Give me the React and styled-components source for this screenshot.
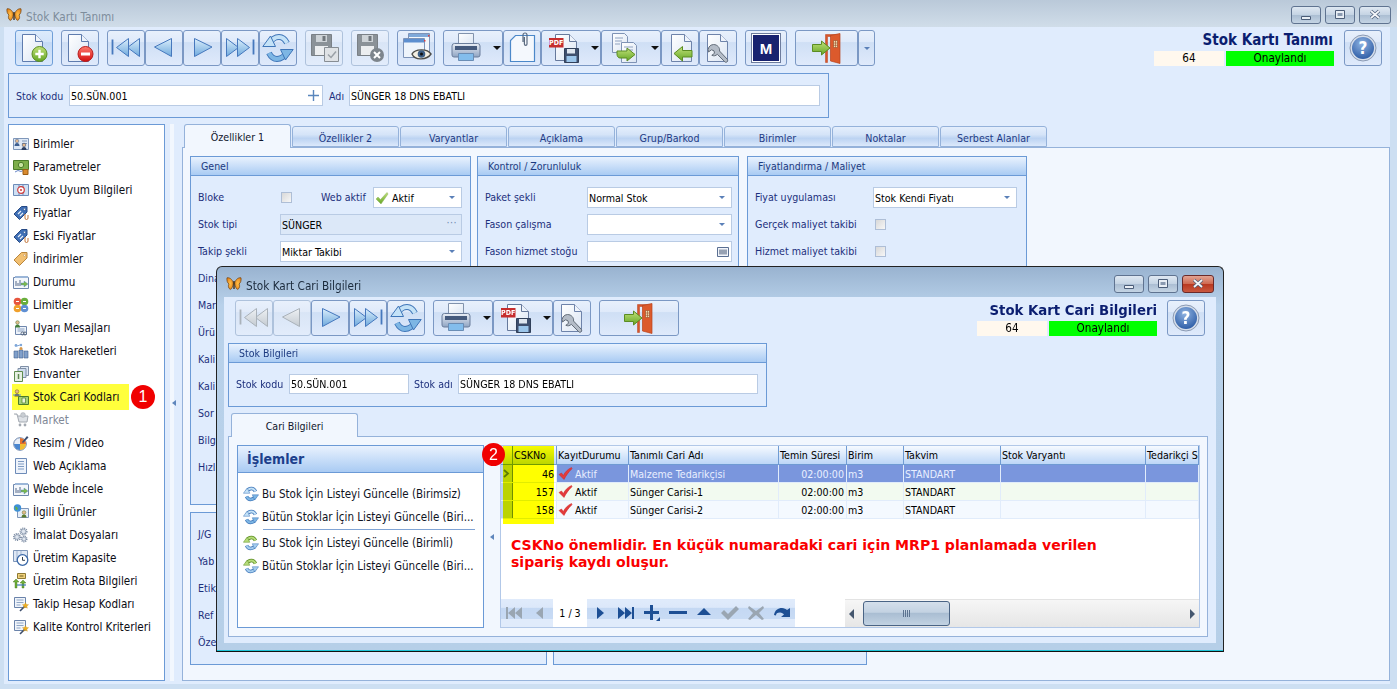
import React from "react";
import styled, { createGlobalStyle } from "styled-components";

const FONT = '"DejaVu Sans", "Liberation Sans", sans-serif';

const Global = createGlobalStyle`
  html, body { margin: 0; padding: 0; overflow: hidden; }
  body { font-family: ${FONT}; font-stretch: condensed; font-size: 10.6px; color: #000; }
  * { box-sizing: border-box; }
`;

/* ---------- frame ---------- */
const Screen = styled.div`
  position: relative;
  width: 1397px;
  height: 689px;
  overflow: hidden;
  display: flex;
  flex-direction: column;
  background: #cddff2;
`;
const TitleBar = styled.div`
  height: 27px;
  flex: none;
  display: flex;
  align-items: flex-start;
  padding: 7px 6px 0 6px;
  background: linear-gradient(#bac9d9, #d0dde9);
`;
const TitleText = styled.div`
  margin-left: 4px;
  padding-top: 1px;
  line-height: 18px;
  font-size: 11.7px;
  color: ${p => (p.$active ? "#1b2a3c" : "#7e8d9c")};
`;
const WinButtons = styled.div`
  margin-left: auto;
  margin-top: -1px;
  display: flex;
  gap: 4px;
`;
const WinButton = styled.div`
  width: ${p => (p.$wide ? 32 : 30)}px;
  height: 18px;
  display: flex;
  align-items: center;
  justify-content: center;
  border: 1px solid ${p => (p.$close ? "#6a2a2a" : "#5f7390")};
  border-radius: 3px;
  background: ${p =>
    p.$close
      ? "linear-gradient(#e2a393, #cf6b53 48%, #b8371f 50%, #c9583f)"
      : "linear-gradient(#dfe8f2, #c5d4e4 48%, #aabdd2 50%, #c4d4e4)"};
`;
const Client = styled.div`
  flex: 1;
  min-height: 0;
  margin: 0 7px 5px 4px;
  display: flex;
  flex-direction: column;
  background: #e0ecfd;
`;
const Toolbar = styled.div`
  display: flex;
  flex: none;
  height: 36px;
  margin: 3px ${p => p.$mr || 8}px 0 11px;
  gap: 8px;
`;
const ToolGroup = styled.div`
  display: flex;
`;
const ToolButton = styled.div`
  width: ${p => p.$w || 38}px;
  height: 36px;
  flex: none;
  display: flex;
  align-items: center;
  justify-content: ${p => (p.$split ? "flex-start" : "center")};
  padding-left: ${p => (p.$split ? 7 : 0)}px;
  border: 1px solid ${p => (p.$off ? "#aec2dc" : p.$hot ? "#6f9fd8" : "#7b98c4")};
  border-radius: 3px;
  background: ${p =>
    p.$hot
      ? "linear-gradient(#dcebfc, #d3e4fa 32%, #c3d9f6 34%, #d8e7fb)"
      : p.$off
      ? "linear-gradient(#e8f0fc, #e2ebf9 32%, #d9e5f6 34%, #e2ecfb)"
      : "linear-gradient(#e8f0fc, #dfeafa 32%, #cfdff5 34%, #dfeafb)"};
`;
const DropMark = styled.span`
  margin-left: 10px;
  width: 0;
  height: 0;
  border-left: 4px solid transparent;
  border-right: 4px solid transparent;
  border-top: 4px solid #111;
`;
const SmallDrop = styled.span`
  width: 0;
  height: 0;
  border-left: 3px solid transparent;
  border-right: 3px solid transparent;
  border-top: 3px solid #5a80b8;
`;
const HeadBlock = styled.div`
  margin-left: auto;
  display: flex;
  gap: 10px;
`;
const HeadText = styled.div`
  display: flex;
  flex-direction: column;
  align-items: flex-end;
  justify-content: flex-end;
`;
const HeadTitle = styled.div`
  font-weight: 700;
  font-size: ${p => p.$size || 15}px;
  line-height: 18px;
  margin: 0 ${p => (p.$flush ? 0 : 1)}px 2px 0;
  color: #0b1e70;
`;
const StatusRow = styled.div`
  display: flex;
  gap: 2px;
  height: 15px;
  line-height: 15px;
  text-align: center;
  font-size: 11.6px;
`;
const StatusNo = styled.div`
  width: 70px;
  background: #fff8ee;
`;
const StatusOk = styled.div`
  width: 108px;
  background: #00ff00;
`;

/* ---------- form parts ---------- */
const FilterBox = styled.div`
  flex: none;
  width: 821px;
  height: 45px;
  margin: 7px 0 0 4px;
  border: 1px solid #6b9ad6;
  display: flex;
  align-items: center;
  padding: 0 8px 0 7px;
  color: #1c2f7c;
`;
const Input = styled.div`
  width: ${p => p.$w}px;
  height: ${p => p.$h || 21}px;
  flex: none;
  display: flex;
  align-items: center;
  padding: 0 ${p => p.$pr || 2}px 0 1px;
  color: #000;
  white-space: nowrap;
  overflow: hidden;
  background: ${p => (p.$off ? "#dce8f8" : "#fff")};
  border: 1px solid #b9cbe4;
`;
const EndMark = styled.span`
  margin-left: auto;
  display: flex;
  align-items: center;
`;
const Body = styled.div`
  flex: 1;
  min-height: 0;
  display: flex;
  margin: 6px 0 3px 4px;
`;
const Side = styled.div`
  width: 157px;
  flex: none;
  padding: 7px 0 0 0;
  font-size: 11.6px;
  background: #fff;
  border: 1px solid #6b9ad6;
`;
const SideRow = styled.div`
  position: relative;
  display: flex;
  align-items: center;
  gap: 4px;
  height: 23px;
  margin-left: ${p => (p.$mark ? 3 : 0)}px;
  padding-left: ${p => (p.$mark ? 1 : 4)}px;
  white-space: nowrap;
  width: ${p => (p.$mark ? "117px" : "auto")};
  color: ${p => (p.$off ? "#7f8896" : "#0c0c14")};
  background: ${p => (p.$mark ? "#ffff3c" : "none")};
  box-shadow: ${p => (p.$mark ? "0 -1px 0 #ffff3c, 0 2px 0 #ffff3c" : "none")};
`;
const Badge = styled.div`
  position: absolute;
  left: ${p => p.$x}px;
  top: ${p => p.$y}px;
  width: ${p => p.$d}px;
  height: ${p => p.$d}px;
  z-index: 3;
  border-radius: 50%;
  background: #f00000;
  color: #fff;
  font-family: "Liberation Sans", sans-serif;
  font-stretch: normal;
  font-size: 16px;
  text-align: center;
  line-height: ${p => p.$d}px;
`;
const Splitter = styled.div`
  width: ${p => p.$w}px;
  flex: none;
  display: flex;
  align-items: center;
  justify-content: center;
  background: ${p =>
    p.$band ? "linear-gradient(90deg, #e0ecfd 30%, #f2f7fe 30%, #f2f7fe 55%, #e0ecfd 55%)" : "none"};
`;
const Arrow = styled.span`
  width: 0;
  height: 0;
  border-top: 3px solid transparent;
  border-bottom: 3px solid transparent;
  border-right: 4px solid #5f86bc;
`;
const TabZone = styled.div`
  flex: 1;
  min-width: 0;
  display: flex;
  flex-direction: column;
`;
const TabBar = styled.div`
  display: flex;
  align-items: flex-end;
  height: 23px;
  flex: none;
  gap: 1px;
  padding-left: ${p => p.$pl}px;
`;
const Tab = styled.div`
  width: ${p => p.$w}px;
  height: ${p => (p.$on ? 24 : 21)}px;
  display: flex;
  align-items: center;
  justify-content: center;
  padding-top: ${p => (p.$sub ? 2 : 1)}px;
  margin-bottom: ${p => (p.$on ? -1 : 0)}px;
  position: relative;
  color: ${p => (p.$on ? "#10162c" : "#1f3b85")};
  border: 1px solid #95b2da;
  border-bottom: ${p => (p.$on ? "none" : "1px solid #95b2da")};
  border-radius: 3px 3px 0 0;
  background: ${p =>
    p.$on ? "#f2f7fe" : "linear-gradient(#e4eefc, #d5e4f8 40%, #bcd3f2 60%, #dce9fb)"};
`;
const TabPage = styled.div`
  flex: 1;
  min-height: 0;
  border: 1px solid #95b2da;
  background: #f2f7fe;
  padding: ${p => p.$pad};
`;
const GroupRow = styled.div`
  display: flex;
  gap: 6px;
  margin-bottom: 7px;
`;
const Group = styled.div`
  width: ${p => p.$w}px;
  height: ${p => p.$h}px;
  flex: none;
  margin: ${p => p.$m || 0};
  border: 1px solid #6b9ad6;
  background: #e0ecfd;
  color: #1c2f7c;
  overflow: hidden;
`;
const GroupHead = styled.div`
  height: 19px;
  padding-left: 10px;
  line-height: 18px;
  font-size: 10.5px;
  color: #1c3a80;
  border-bottom: 1px solid #6b9ad6;
  background: linear-gradient(#e9f2fe, #a9cbf3);
`;
const Field = styled.div`
  display: flex;
  align-items: center;
  height: 21px;
`;
const InfoField = styled.div`
  display: flex;
  align-items: center;
  height: 20px;
  margin: 11px 0 0 7px;
`;
const FieldLabel = styled.div`
  width: ${p => p.$w}px;
  flex: none;
  white-space: nowrap;
  padding-left: ${p => p.$pl || 0}px;
`;
const WebLabel = styled.span`
  width: 52px;
  flex: none;
  margin-left: 29px;
  white-space: nowrap;
`;
const GroupBody = styled.div`
  display: flex;
  flex-direction: column;
  gap: 6px;
  padding: ${p => p.$pt || 11}px 0 0 7px;
  ${FieldLabel}, ${WebLabel} {
    padding-bottom: 2px;
  }
`;
const Check = styled.span`
  width: 11px;
  height: 11px;
  flex: none;
  margin-left: ${p => p.$ml || 1}px;
  border: 1px solid #aebed6;
  background: linear-gradient(135deg, #d8d8d8, #f7f7f7);
`;
const DotMark = styled.span`
  margin-left: auto;
  margin-right: 2px;
  color: #6f8bb0;
  letter-spacing: 0.5px;
  line-height: 1;
  padding-bottom: 4px;
`;

/* ---------- modal ---------- */
const Modal = styled.div`
  position: absolute;
  left: 216px;
  top: 266px;
  width: 1008px;
  height: 386px;
  z-index: 5;
  display: flex;
  flex-direction: column;
  padding: 0 7px;
  border: 1px solid #222;
  border-bottom: 1px solid #111;
  border-radius: 6px 6px 0 0;
  background: linear-gradient(#99b3d0, #b8d1ea 10%, #b6cfe8);
  box-shadow: inset 0 -1px 0 #1fc3d6;
`;
const ModalTitle = styled.div`
  height: 30px;
  flex: none;
  display: flex;
  align-items: flex-start;
  padding: 9px 2px 0 2px;
`;
const ModalBody = styled.div`
  height: 346px;
  flex: none;
  display: flex;
  flex-direction: column;
  background: #e0ecfd;
`;
const ModalTabs = styled.div`
  flex: none;
  margin: 6px 8px 0 4px;
  display: flex;
  flex-direction: column;
  height: 224px;
`;
const PageRow = styled.div`
  display: flex;
  height: 183px;
`;
const Panel = styled.div`
  width: 247px;
  flex: none;
  background: #fff;
  border: 1px solid #6b9ad6;
`;
const PanelHead = styled.div`
  height: 27px;
  padding-left: 9px;
  line-height: 27px;
  font-weight: 700;
  font-size: 14px;
  color: #1c3f8c;
  border-bottom: 1px solid #6b9ad6;
  background: linear-gradient(#e9f2fe, #a9cbf3);
`;
const PanelList = styled.div`
  padding: 9px 0 0 5px;
`;
const PanelItem = styled.div`
  display: flex;
  align-items: center;
  gap: 3px;
  height: 23px;
  font-size: 11.5px;
  white-space: nowrap;
  color: #10141f;
`;
const PanelRule = styled.div`
  height: 1px;
  margin: 1px 8px 1px 20px;
  background: #7fa3d4;
`;
const Grid = styled.div`
  position: relative;
  width: 700px;
  flex: none;
  display: flex;
  flex-direction: column;
  background: #fff;
  border: 1px solid #b2c8e8;
`;
const Marker = styled.div`
  position: absolute;
  left: 2px;
  top: 0;
  width: 51px;
  height: 78px;
  z-index: 2;
  background: #ffff00;
  mix-blend-mode: multiply;
`;
const GridRow = styled.div`
  display: flex;
  flex: none;
  height: ${p => (p.$head ? 19 : 18)}px;
  color: ${p => (p.$sel ? "#e9efff" : "#000")};
  background: ${p => p.$bg || "none"};
  border-bottom: ${p => (p.$head ? "1px solid #6f9bd3" : "1px solid #e1ecfb")};
`;
const Cell = styled.div`
  flex: none;
  width: ${p => p.$w}px;
  display: flex;
  align-items: center;
  gap: 2px;
  padding: 0 2px 0 1px;
  overflow: hidden;
  white-space: nowrap;
  justify-content: ${p => (p.$right ? "flex-end" : "flex-start")};
  color: ${p => (p.$key ? "#000" : "inherit")};
  background: ${p =>
    p.$head ? "linear-gradient(#f6faff, #bcd6f7)" : p.$ind ? "#bcd3f1" : p.$key ? "#fff" : "none"};
  border-right: 1px solid ${p => (p.$head ? "#6f9bd3" : p.$ind ? "#6f8d4c" : "#e1ecfb")};
`;
const Note = styled.div`
  flex: 1;
  min-height: 0;
  padding: 18px 0 0 10px;
  font-stretch: normal;
  font-weight: 700;
  font-size: 14.05px;
  line-height: 17px;
  color: #fa0000;
`;
const Foot = styled.div`
  flex: none;
  height: 28px;
  display: flex;
`;
const NavBand = styled.div`
  display: flex;
  width: 294px;
  flex: none;
  background: linear-gradient(#e0ebfb, #dce8fa 30%, #c4d8f3 32%, #c8dbf4 70%, #e0ebfb 72%);
`;
const NavCell = styled.div`
  width: 26px;
  flex: none;
  display: flex;
  align-items: center;
  justify-content: center;
`;
const NavCount = styled.div`
  width: 34px;
  flex: none;
  text-align: center;
  line-height: 28px;
  background: #fff;
`;
const Scroll = styled.div`
  margin-left: 50px;
  flex: 1;
  display: flex;
  align-items: center;
  padding-right: 4px;
  background: linear-gradient(#f6f6f6, #e6e6e6);
  border-top: 1px solid #e3e3e3;
`;
const Thumb = styled.div`
  width: 87px;
  height: 25px;
  margin: 0 auto 1px 9px;
  display: flex;
  align-items: center;
  justify-content: center;
  border: 1px solid #4a6485;
  border-radius: 3px;
  background: linear-gradient(#d4dfeb, #c3d2e2 45%, #a9bdd2 48%, #c2d2e2);
`;
const ScrollHead = styled.span`
  width: 0;
  height: 0;
  margin-left: 4px;
  border-top: 5px solid transparent;
  border-bottom: 5px solid transparent;
  ${p => (p.$back ? "border-right: 5px solid #44566e;" : "border-left: 5px solid #44566e;")}
`;
const Grip = styled.span`
  width: 7px;
  height: 7px;
  background: repeating-linear-gradient(90deg, #5c7390 0 1px, transparent 1px 2px);
`;
const MLogoBox = styled.div`
  width: 30px;
  height: 30px;
  border: 1px solid #6d7c9d;
  padding: 1px;
  background: #fff;
`;
const MLogoInner = styled.div`
  height: 100%;
  display: flex;
  align-items: center;
  justify-content: center;
  background: #18226f;
  color: #fff;
  font-family: "Liberation Sans", sans-serif;
  font-weight: 700;
  font-size: 15px;
`;
const DefsHolder = styled.svg`
  position: absolute;
  width: 0;
  height: 0;
`;
const IcSvg = styled.svg`
  flex: none;
`;

/* ---------- icons ---------- */
const Defs = () => (
  <DefsHolder>
    <defs>
      <linearGradient id="paper" x1="0" y1="0" x2="1" y2="1">
        <stop offset="0" stopColor="#ffffff" />
        <stop offset="1" stopColor="#dbe5f3" />
      </linearGradient>
      <linearGradient id="arrowBlue" x1="0" y1="0" x2="0" y2="1">
        <stop offset="0" stopColor="#dbeefb" />
        <stop offset="1" stopColor="#6ea9dd" />
      </linearGradient>
      <linearGradient id="arrowGray" x1="0" y1="0" x2="0" y2="1">
        <stop offset="0" stopColor="#eef1f4" />
        <stop offset="1" stopColor="#c3cad1" />
      </linearGradient>
      <linearGradient id="greenFill" x1="0" y1="0" x2="0" y2="1">
        <stop offset="0" stopColor="#c2e27a" />
        <stop offset="1" stopColor="#63a524" />
      </linearGradient>
      <linearGradient id="redFill" x1="0" y1="0" x2="0" y2="1">
        <stop offset="0" stopColor="#ff7b6e" />
        <stop offset="1" stopColor="#d40d0d" />
      </linearGradient>
      <linearGradient id="printer" x1="0" y1="0" x2="0" y2="1">
        <stop offset="0" stopColor="#e9eef6" />
        <stop offset="1" stopColor="#8fa4c2" />
      </linearGradient>
      <radialGradient id="helpBlue" cx="0.45" cy="0.3" r="0.8">
        <stop offset="0" stopColor="#8fb3e2" />
        <stop offset="1" stopColor="#23539f" />
      </radialGradient>
      <radialGradient id="wing" cx="0.5" cy="0.5" r="0.7">
        <stop offset="0" stopColor="#ffc14a" />
        <stop offset="1" stopColor="#e0730f" />
      </radialGradient>
    </defs>
  </DefsHolder>
);

const Ic = ({ s = 32, vb = 32, children }) => (
  <IcSvg width={s} height={s} viewBox={`0 0 ${vb} ${vb}`}>
    {children}
  </IcSvg>
);

const Page = () => (
  <>
    <path d="M4.500 2.500h13l7 7v20h-20z" fill="url(#paper)" stroke="#5f7cae" />
    <path d="M17.500 2.500v7h7" fill="#eef3fb" stroke="#5f7cae" />
  </>
);

const Butterfly = () => (
  <Ic s={16} vb={16}>
    <path d="M7.400 7C6.400 3.400 3.600 1.300 1 1.800.5 4.200 1.400 7 3 8c-1 1.200-.9 4.300 1.200 5.400C6 13.200 7 10 7.400 7z" fill="url(#wing)" stroke="#6d4210" strokeWidth=".7" />
    <path d="M8.600 7c1-3.600 3.800-5.700 6.400-5.200.5 2.400-.4 5.200-2 6.200 1 1.200.9 4.300-1.200 5.400C10 13.200 9 10 8.600 7z" fill="url(#wing)" stroke="#6d4210" strokeWidth=".7" />
    <path d="M8 5v8" stroke="#3a2408" strokeWidth="1.300" />
  </Ic>
);

const IconNew = () => (
  <Ic>
    <Page />
    <circle cx="21.500" cy="22" r="7.500" fill="url(#greenFill)" stroke="#5b8c22" />
    <path d="M21.500 17.800v8.400M17.300 22h8.400" stroke="#fff" strokeWidth="2.400" />
  </Ic>
);
const IconDel = () => (
  <Ic>
    <Page />
    <circle cx="21.500" cy="22" r="7.500" fill="url(#redFill)" stroke="#b71c1c" />
    <path d="M17 22h9" stroke="#fff" strokeWidth="3" />
  </Ic>
);
const arrowProps = off => ({
  fill: off ? "url(#arrowGray)" : "url(#arrowBlue)",
  stroke: off ? "#aab2ba" : "#4678bd",
  strokeWidth: 1,
});
const IconFirst = ({ off }) => (
  <Ic>
    <path d="M2.500 7.500v15" stroke={off ? "#aab2ba" : "#4678bd"} strokeWidth="1.800" />
    <path d="M29.500 6.500v18l-12-9z" {...arrowProps(off)} />
    <path d="M18.500 6.500v18l-12-9z" {...arrowProps(off)} />
  </Ic>
);
const IconPrev = ({ off }) => (
  <Ic>
    <path d="M23.500 6.500v18L6.500 15z" {...arrowProps(off)} />
  </Ic>
);
const IconNext = ({ off }) => (
  <Ic>
    <path d="M8.500 6.500v18L26 15z" {...arrowProps(off)} />
  </Ic>
);
const IconLast = ({ off }) => (
  <Ic>
    <path d="M29.500 7.500v15" stroke={off ? "#aab2ba" : "#4678bd"} strokeWidth="1.800" />
    <path d="M2.500 6.500v18l12-9z" {...arrowProps(off)} />
    <path d="M13.500 6.500v18l12-9z" {...arrowProps(off)} />
  </Ic>
);
const SpinPaths = ({ a = "#3e75b8", la = "#c4e2f7", b = "#3e75b8", lb = "#7db6e4", w = 6 }) => (
  <>
    <path d="M7 13C9 7 14 5 17 5c3 0 6 2 8 6" fill="none" stroke={a} strokeWidth={w} />
    <path d="M7 13C9 7 14 5 17 5c3 0 6 2 8 6" fill="none" stroke={la} strokeWidth="4" />
    <path d="M25 19c-2 6-7 8-10 8-3 0-6-2-8-6" fill="none" stroke={b} strokeWidth={w} />
    <path d="M25 19c-2 6-7 8-10 8-3 0-6-2-8-6" fill="none" stroke={lb} strokeWidth="4" />
    <path d="M.8 14.500L8.500 4l5 10.500z" fill={la} stroke={a} />
    <path d="M31.200 17.500L23.500 28l-5-10.500z" fill={lb} stroke={b} />
  </>
);
const IconRefresh = () => (
  <Ic>
    <SpinPaths />
  </Ic>
);
const SpinBlue = () => (
  <Ic s={16} vb={32}>
    <SpinPaths w={7} />
  </Ic>
);
const SpinGreen = () => (
  <Ic s={16} vb={32}>
    <SpinPaths a="#5b8c22" la="#b6dc7a" lb="#a5cdee" w={7} />
  </Ic>
);
const Floppy = () => (
  <>
    <path d="M3.500 2.500h20v21h-20z" fill="#8b9298" stroke="#7a8086" />
    <path d="M8 3h11v7H8z" fill="#ced3d7" />
    <path d="M14.500 4h3v5h-3z" fill="#70767c" />
    <path d="M7 14h13v9H7z" fill="#eceef0" />
  </>
);
const IconSave = () => (
  <Ic>
    <Floppy />
    <path d="M16.500 15.500h14v14h-14z" fill="#dfe2e5" stroke="#878d93" />
    <path d="M20 22.500l3 3 5-6" fill="none" stroke="#9aa0a6" strokeWidth="1.500" />
  </Ic>
);
const IconSaveX = () => (
  <Ic>
    <Floppy />
    <circle cx="23" cy="23" r="7" fill="#7d858c" />
    <path d="M20 20l6 6M26 20l-6 6" stroke="#fff" strokeWidth="2" />
  </Ic>
);
const IconView = () => (
  <Ic>
    <path d="M8.500 1.500h21v19h-21z" fill="#f3f7fc" stroke="#7d93b8" />
    <path d="M9 2h20v3H9z" fill="#7fa9da" />
    <path d="M3.500 6.500h21v19h-21z" fill="#eef4fb" stroke="#7d93b8" />
    <path d="M4 7h20v3.500H4z" fill="#5d8fcf" />
    <path d="M24 8h1.500v1.500H24zM28 3h1.500v1.500H28z" fill="#e04040" />
    <path d="M12 22c3-5 15-6 19 0-4 6-16 7-19 0z" fill="#f4efe2" stroke="#4c4c48" strokeWidth="1.400" />
    <circle cx="21.500" cy="22" r="3.800" fill="#3d5f86" />
    <circle cx="21.500" cy="22" r="1.500" fill="#111" />
  </Ic>
);
const IconPrinter = () => (
  <Ic>
    <path d="M7.500 1.500h15v11h-15z" fill="url(#paper)" stroke="#8293ad" />
    <path d="M3.500 11.500h23a2.500 2.500 0 0 1 2.500 2.500v9a2 2 0 0 1-2 2h-24a2 2 0 0 1-2-2v-9a2.500 2.500 0 0 1 2.500-2.500z" fill="url(#printer)" stroke="#6a7d9b" />
    <path d="M4 14h22v4H4z" fill="#44597c" />
    <path d="M7.500 21.500h15v7h-15z" fill="#83bdec" stroke="#6a8db5" />
  </Ic>
);
const IconClip = () => (
  <Ic>
    <path d="M9.500 3.500h19v26h-24v-21z" fill="#f4f8fd" stroke="#4b88c9" strokeWidth="1.200" />
    <path d="M17 10V3a2 2 0 0 1 4 0v9a1.300 1.300 0 0 1-2.600 0V5" fill="none" stroke="#5b6b80" strokeWidth="1.200" />
  </Ic>
);
const IconPdf = () => (
  <Ic>
    <path d="M6.500 2.500h14l7 7v19h-21z" fill="url(#paper)" stroke="#66799c" />
    <path d="M20.500 2.500v7h7" fill="#eef3fb" stroke="#66799c" />
    <path d="M0 6h14.500v9.500H0z" fill="#c62d2d" />
    <text x="7.200" y="13.300" fontSize="7" fontWeight="700" fill="#fff" textAnchor="middle">PDF</text>
    <path d="M15.500 16.500h14v14h-14z" fill="#3e4f6d" stroke="#31405a" />
    <path d="M18 17h8v4.500h-8z" fill="#dfe6ef" />
    <path d="M17.500 24h10v6h-10z" fill="#9bc5ea" />
  </Ic>
);
const IconCopy = () => (
  <Ic>
    <path d="M3.500 1.500h12l3 3v16h-15z" fill="url(#paper)" stroke="#7f93b5" />
    <path d="M12.500 10.500h12l3 3v17h-15z" fill="url(#paper)" stroke="#7f93b5" />
    <path d="M6 6h8M6 9h7M6 12h5M15 15h9M17 18h7M17 21h7" stroke="#8fa2c0" />
    <path d="M8 19h10v-3l8 6.500-8 6.500v-3h-7c-2 0-3-2-3-4z" fill="url(#greenFill)" stroke="#5b8c22" />
  </Ic>
);
const IconBack = () => (
  <Ic>
    <path d="M7.500 2.500h13l7 7v20h-20z" fill="url(#paper)" stroke="#6e83aa" />
    <path d="M20.500 2.500v7h7" fill="#eef3fb" stroke="#6e83aa" />
    <path d="M10 21.500l8.500-7v4H28v6.500h-9.500v4z" fill="url(#greenFill)" stroke="#5b8c22" />
  </Ic>
);
const IconWrench = () => (
  <Ic>
    <path d="M5.500 2.500h13l7 7v20h-20z" fill="url(#paper)" stroke="#6e83aa" />
    <path d="M18.500 2.500v7h7" fill="#eef3fb" stroke="#6e83aa" />
    <path d="M11.500 12.500a5.500 5.500 0 0 0-5 7.500l3-2.200 2.500 1 .5 2.500-2.700 2c2 1 4 .5 5.500-1l7.500 7.500c1.500 1.500 3.800-.7 2.500-2.500L17.500 19c.7-3-2-6.500-6-6.500z" fill="#b4bcc7" stroke="#626c78" />
  </Ic>
);
const IconExit = () => (
  <Ic>
    <path d="M14.500 2.500h14v28h-2V4.500h-10v26h-2z" fill="#d8552a" stroke="#b9431d" strokeWidth=".5" />
    <path d="M19.500 3.500L29 1.500v30l-9.500-2.500z" fill="#dc5a2c" stroke="#b8441c" strokeWidth=".7" />
    <path d="M22.500 8.500h4v7h-4z" fill="#eedfb3" stroke="#9a4a25" strokeWidth=".6" />
    <path d="M24.500 8.500v7M22.500 11h4M22.500 13.300h4" stroke="#9a4a25" strokeWidth=".6" />
    <path d="M1.500 12.500h9V9l8.500 7-8.500 7v-3.500h-9z" fill="url(#greenFill)" stroke="#5b8c22" />
  </Ic>
);
const IconHelp = () => (
  <Ic s={28} vb={28}>
    <circle cx="14" cy="14" r="13" fill="#d6deea" stroke="#8a9ab4" />
    <circle cx="14" cy="14" r="11" fill="url(#helpBlue)" />
    <text x="14" y="20" fontSize="17" fontWeight="700" fill="#fff" textAnchor="middle">?</text>
  </Ic>
);
const TinyPlus = () => (
  <Ic s={13} vb={13}>
    <path d="M6.500 1v11M1 6.500h11" stroke="#5a86bd" strokeWidth="1.400" />
  </Ic>
);
const CheckGreen = () => (
  <Ic s={14} vb={14}>
    <path d="M1 8l2-2 2.500 2.500L12 1.500l1 1.500-7 10z" fill="url(#greenFill)" stroke="#8eb060" strokeWidth=".5" />
  </Ic>
);
const CheckRed = () => (
  <Ic s={15} vb={15}>
    <path d="M1 8.500l2.500-1.500 1.800 2.500C7 6 10 3 13.500 1.500l.5 1.200C10.500 6 8 9.500 6 13.500z" fill="#e33b3b" stroke="#c22" strokeWidth=".5" />
  </Ic>
);
const BarcodeBtn = () => (
  <Ic s={12} vb={12}>
    <path d="M.5 1.500h11v9H.5z" fill="#f2f5fa" stroke="#5a6f92" />
    <path d="M3 3.500v5M5 3.500v5M7 3.500v5M9 3.500v5" stroke="#3d4e6c" />
  </Ic>
);

/* window glyphs */
const GlyphMin = () => <Ic s={12} vb={12}><path d="M1.500 7.500h9v3h-9z" fill="#e8eef5" stroke="#4b5d78" /></Ic>;
const GlyphMax = () => <Ic s={12} vb={12}><path d="M1.500 1.500h9v8h-9z" fill="#e8eef5" stroke="#4b5d78" /><path d="M3.500 4h5v3h-5z" fill="#8a9ab0" /></Ic>;
const GlyphClose = () => (
  <Ic s={14} vb={14}>
    <path d="M3 3l8 7M11 3l-8 7" stroke="#4b5d78" strokeWidth="3.200" />
    <path d="M3 3l8 7M11 3l-8 7" stroke="#f4f6f9" strokeWidth="1.800" />
  </Ic>
);

/* sidebar glyphs */
const Cog = ({ x, y, r, c = "#7f8fa6" }) => (
  <>
    <circle cx={x} cy={y} r={r} fill="none" stroke={c} strokeWidth={r * 0.7} strokeDasharray="1 .8" />
    <circle cx={x} cy={y} r={r * 0.75} fill="#dfe6ef" stroke={c} strokeWidth=".6" />
  </>
);
const Head = ({ x, y, c = "#9b6a32" }) => (
  <>
    <circle cx={x} cy={y} r="1.800" fill="#e5b98c" stroke={c} strokeWidth=".5" />
    <path d={`M${x - 2.5} ${y + 5}c0-2 1-3 2.500-3s2.500 1 2.500 3z`} fill={c} />
  </>
);
const Tag = ({ c, s }) => (
  <>
    <path d="M1 9l7.500-7.500H14v5.500L6.500 14.500z" fill={c} stroke={s} />
    <circle cx="11.500" cy="4.300" r="1" fill="#fff" stroke={s} strokeWidth=".5" />
  </>
);
const Chart = () => (
  <>
    <path d="M.5 3.500h15v11H.5z" fill="#f4f7fb" stroke="#6e87ad" />
    <path d="M2 2h13v2H2z" fill="#9bb6d8" />
    <path d="M3 7v5M5 9v3M7 6v6" stroke="#55698a" />
    <path d="M8 9h3V7l4 3-4 3v-2H8z" fill="#7cb94a" stroke="#4a7fb8" strokeWidth=".4" />
  </>
);
const Wand = () => (
  <>
    <path d="M1.500 1.500h11v10h-11z" fill="#f0f4fa" stroke="#6a83ab" />
    <path d="M3.500 4h7M3.500 6.500h7M3.500 9h4" stroke="#8fa6c6" />
    <path d="M7 15l5-5" stroke="#3c4d6b" strokeWidth="1.600" />
    <path d="M12.500 6.500l.8 2 2.200.2-1.700 1.400.5 2.100-1.800-1.100-1.800 1.100.5-2.100L9.500 8.700l2.200-.2z" fill="#f1b01e" stroke="#c78a10" strokeWidth=".4" />
  </>
);

const SIDE_ICONS = {
  birimler: (
    <>
      <path d="M.5 2.500h15v11H.5z" fill="#dfe9f6" stroke="#7f97ba" />
      <Head x={4} y={5} c="#3f5f8f" />
      <path d="M9 5h5M9 7.500h5" stroke="#7f97ba" />
      <Head x={11} y={9} c="#2d3f62" />
    </>
  ),
  param: (
    <>
      <path d="M.5 1.500h15v9H.5z" fill="#7eae4a" stroke="#4c7c2a" />
      <circle cx="8" cy="6" r="2.700" fill="#c7e3a0" stroke="#4c7c2a" />
      <path d="M2 13l3-1.500 3 1 2-1" stroke="#6a88c8" fill="none" />
      <path d="M10 10.500h5v5h-5z" fill="#d98a2e" stroke="#9b5d15" />
    </>
  ),
  uyum: (
    <>
      <path d="M.5 2.500h15v11H.5z" fill="#cfe0f4" stroke="#6e8cb8" />
      <path d="M6 3v10M10 3v10" stroke="#6e8cb8" />
      <circle cx="8" cy="8" r="3.300" fill="#fff" stroke="#cf3a3a" strokeWidth="1.200" />
      <circle cx="8" cy="8" r="1" fill="#cf3a3a" />
    </>
  ),
  tag: (
    <>
      <Tag c="#3f6fb5" s="#274a85" />
      <path d="M5 9l3-3M7 11l3-3" stroke="#e8f0fb" strokeWidth="1.200" />
      <path d="M12 9v4a1.500 1.500 0 0 0 3 0v-3" fill="none" stroke="#c3763a" strokeWidth="1" />
    </>
  ),
  discount: <Tag c="#f2c071" s="#b9853c" />,
  chart: <Chart />,
  coins: (
    <>
      <circle cx="4.500" cy="4.500" r="3.800" fill="#e7553d" />
      <circle cx="11.500" cy="4.500" r="3.800" fill="#69ae3c" />
      <circle cx="4.500" cy="11.500" r="3.800" fill="#f0a02b" />
      <circle cx="11.500" cy="11.500" r="3.800" fill="#5e8fd3" />
      <path d="M3 4.500h3M10 4.500h3M3 11.500h3M10 11.500h3" stroke="#fff" />
    </>
  ),
  warn: (
    <>
      <path d="M2.500 6.500h11v8h-11z" fill="#eef3fa" stroke="#6f87ad" />
      <path d="M4.500 9h7M4.500 11h7" stroke="#8ba2c2" />
      <Head x={4.5} y={2.5} c="#45803a" />
      <circle cx="12" cy="13.500" r="1.500" fill="none" stroke="#5a6a80" />
      <circle cx="9.500" cy="13.500" r="1.500" fill="none" stroke="#5a6a80" />
    </>
  ),
  moves: (
    <>
      <circle cx="3" cy="2.500" r="1.400" fill="#7ea6d8" />
      <circle cx="8" cy="2" r="1.200" fill="#7ea6d8" />
      <path d="M4 3l3-1" stroke="#7ea6d8" />
      <path d="M1 8h4v7H1zM6 7h4v8H6zM11 8h4v7h-4z" fill="#7f9fca" stroke="#44618e" strokeWidth=".6" />
      <circle cx="8" cy="5.500" r="1.500" fill="#d99745" />
    </>
  ),
  stack: (
    <>
      <path d="M7.500 .5h8v9h-8z" fill="#dde7f4" stroke="#7f8fa6" />
      <path d="M5 2.500h8v9H5z" fill="#cfdcee" stroke="#7f8fa6" />
      <path d="M1.500 5.500h8v10h-8z" fill="#e7f0e3" stroke="#5e8a4e" />
      <path d="M5.500 8v5" stroke="#5e8a4e" strokeWidth="1.500" />
    </>
  ),
  cari: (
    <>
      <Head x={4} y={2.5} c="#7a5a20" />
      <path d="M0 6h8" stroke="#5d8fcf" />
      <path d="M5.500 7.500h10v8h-10z" fill="#a5cf79" stroke="#4c7c2a" />
      <path d="M9 9h3.500v5H9z" fill="#eaf4d8" stroke="#4c7c2a" strokeWidth=".7" />
    </>
  ),
  cart: (
    <>
      <path d="M1 2h3l2 8h8l1-6H5" fill="#dde1e6" stroke="#a2a8b0" />
      <circle cx="7" cy="13" r="1.400" fill="#a2a8b0" />
      <circle cx="12" cy="13" r="1.400" fill="#a2a8b0" />
      <circle cx="10" cy="3" r="2.400" fill="#c8cdd3" stroke="#a2a8b0" strokeWidth=".5" />
    </>
  ),
  media: (
    <>
      <circle cx="7" cy="9" r="6.300" fill="#e9eef6" stroke="#6e87ad" />
      <path d="M7 9V3a6 6 0 0 1 6 6z" fill="#e8702a" />
      <path d="M7 9H1a6 6 0 0 0 6 6z" fill="#4a86cf" />
      <path d="M7 9v6a6 6 0 0 0 6-6z" fill="#f1bd33" />
      <path d="M9 7l5-6 1.500 1.500L10 8z" fill="#3a4d70" />
    </>
  ),
  doc: (
    <>
      <path d="M2.500 .5h11v15h-11z" fill="#eef3fb" stroke="#6d8bb8" />
      <path d="M5 3.500h6M5 6h6M5 8.500h6M5 11h6" stroke="#7f9bc3" />
    </>
  ),
  globe: (
    <>
      <path d="M4.500 4.500h11v9h-11z" fill="#e6eef9" stroke="#7f97ba" />
      <circle cx="4.500" cy="4" r="3.700" fill="#3f90d9" />
      <path d="M2 2.500l2 .5 1 2-2 1.500z" fill="#63b04a" />
      <Head x={11} y={8.5} c="#5b7a2c" />
    </>
  ),
  gears: (
    <>
      <Cog x={10.5} y={4.5} r={3} />
      <Cog x={4} y={10} r={3} />
      <Cog x={11} y={12} r={2.6} />
    </>
  ),
  clock: (
    <>
      <path d="M.5 .5h14v11H.5z" fill="#dfe8f5" stroke="#7f97ba" />
      <path d="M4 1v10M8 1v5" stroke="#a3b7d3" />
      <circle cx="9.500" cy="10" r="5.300" fill="#fff" stroke="#3a68a8" strokeWidth="1.300" />
      <path d="M9.500 7v3.300h2.500" fill="none" stroke="#33404f" />
    </>
  ),
  route: (
    <>
      <path d="M4.500 .5h8v5h-8z" fill="#f1d27c" stroke="#8f7a35" />
      <path d="M6.500 3h4" stroke="#6b5b20" />
      <path d="M2 15V9H0l3-3 3 3H4v6zM9 15v-5H7l3-3 3 3h-2v5z" fill="#6fae3a" stroke="#3f6f1a" strokeWidth=".4" />
      <path d="M4 12h9" stroke="#3f79b8" strokeWidth="1.200" />
    </>
  ),
  wand: <Wand />,
};

const SideIcon = ({ name }) => (
  <Ic s={16} vb={16}>
    {SIDE_ICONS[name]}
  </Ic>
);

/* grid nav glyphs */
const NAV_ON = "#1d4f94";
const NAV_OFF = "#9aa6b2";
const Nav = ({ children }) => (
  <NavCell>
    <Ic s={20} vb={20}>
      {children}
    </Ic>
  </NavCell>
);
const Indicator = () => (
  <Ic s={9} vb={9}>
    <path d="M2 1l4 3.500L2 8" fill="none" stroke="#5d7d1e" strokeWidth="1.800" />
  </Ic>
);
const MLogo = () => (
  <MLogoBox>
    <MLogoInner>M</MLogoInner>
  </MLogoBox>
);

/* ---------- data ---------- */
const TABS = ["Özellikler 1", "Özellikler 2", "Varyantlar", "Açıklama", "Grup/Barkod", "Birimler", "Noktalar", "Serbest Alanlar"];

const SIDE = [
  ["Birimler", "birimler"],
  ["Parametreler", "param"],
  ["Stok Uyum Bilgileri", "uyum"],
  ["Fiyatlar", "tag"],
  ["Eski Fiyatlar", "tag"],
  ["İndirimler", "discount"],
  ["Durumu", "chart"],
  ["Limitler", "coins"],
  ["Uyarı Mesajları", "warn"],
  ["Stok Hareketleri", "moves"],
  ["Envanter", "stack"],
  ["Stok Cari Kodları", "cari", "mark"],
  ["Market", "cart", "off"],
  ["Resim / Video", "media"],
  ["Web Açıklama", "doc"],
  ["Webde İncele", "chart"],
  ["İlgili Ürünler", "globe"],
  ["İmalat Dosyaları", "gears"],
  ["Üretim Kapasite", "clock"],
  ["Üretim Rota Bilgileri", "route"],
  ["Takip Hesap Kodları", "wand"],
  ["Kalite Kontrol Kriterleri", "wand"],
];

const COLS = [
  ["CSKNo", 44],
  ["KayıtDurumu", 72],
  ["Tanımlı Cari Adı", 150],
  ["Temin Süresi", 68],
  ["Birim", 57],
  ["Takvim", 97],
  ["Stok Varyantı", 145],
  ["Tedarikçi Süresi", 53],
];

const ROWS = [
  { no: 46, name: "Malzeme Tedarikçisi", sel: true, bg: "#7a96dd" },
  { no: 157, name: "Sünger Carisi-1", bg: "#f2faf0" },
  { no: 158, name: "Sünger Carisi-2", bg: "#f4f9ff" },
];

const Combo = ({ w, children }) => (
  <Input $w={w} $pr={6}>
    {children}
    <EndMark>
      <SmallDrop />
    </EndMark>
  </Input>
);

const App = () => (
  <Screen>
    <Global />
    <Defs />
    <TitleBar>
      <Butterfly />
      <TitleText>Stok Kartı Tanımı</TitleText>
      <WinButtons>
        <WinButton><GlyphMin /></WinButton>
        <WinButton><GlyphMax /></WinButton>
        <WinButton $wide><GlyphClose /></WinButton>
      </WinButtons>
    </TitleBar>
    <Client>
      <Toolbar>
        <ToolButton $hot><IconNew /></ToolButton>
        <ToolButton><IconDel /></ToolButton>
        <ToolGroup>
          <ToolButton><IconFirst /></ToolButton>
          <ToolButton><IconPrev /></ToolButton>
          <ToolButton><IconNext /></ToolButton>
          <ToolButton><IconLast /></ToolButton>
          <ToolButton><IconRefresh /></ToolButton>
        </ToolGroup>
        <ToolButton $off><IconSave /></ToolButton>
        <ToolButton $off><IconSaveX /></ToolButton>
        <ToolButton><IconView /></ToolButton>
        <ToolGroup>
          <ToolButton $w={60} $split><IconPrinter /><DropMark /></ToolButton>
          <ToolButton><IconClip /></ToolButton>
          <ToolButton $w={60} $split><IconPdf /><DropMark /></ToolButton>
          <ToolButton $w={60} $split><IconCopy /><DropMark /></ToolButton>
          <ToolButton><IconBack /></ToolButton>
          <ToolButton><IconWrench /></ToolButton>
        </ToolGroup>
        <ToolButton $w={42}><MLogo /></ToolButton>
        <ToolGroup>
          <ToolButton $w={63}><IconExit /></ToolButton>
          <ToolButton $w={17}><SmallDrop /></ToolButton>
        </ToolGroup>
        <HeadBlock>
          <HeadText>
            <HeadTitle>Stok Kartı Tanımı</HeadTitle>
            <StatusRow>
              <StatusNo>64</StatusNo>
              <StatusOk>Onaylandı</StatusOk>
            </StatusRow>
          </HeadText>
          <ToolButton><IconHelp /></ToolButton>
        </HeadBlock>
      </Toolbar>

      <FilterBox>
        <FieldLabel $w={53}>Stok kodu</FieldLabel>
        <Input $w={254}>
          50.SÜN.001
          <EndMark><TinyPlus /></EndMark>
        </Input>
        <FieldLabel $w={26} $pl={6}>Adı</FieldLabel>
        <Input $w={471}>SÜNGER 18 DNS EBATLI</Input>
      </FilterBox>

      <Body>
        <Side>
          {SIDE.map(([label, icon, flag]) => (
            <SideRow key={label} $mark={flag === "mark"} $off={flag === "off"}>
              <SideIcon name={icon} />
              {label}
              {flag === "mark" && <Badge $x={119} $y={0} $d={24}>1</Badge>}
            </SideRow>
          ))}
        </Side>
        <Splitter $w={17} $band><Arrow /></Splitter>
        <TabZone>
          <TabBar $pl={2}>
            {TABS.map((t, i) => (
              <Tab key={t} $w={107} $on={i === 0} $sub={i > 0}>{t}</Tab>
            ))}
          </TabBar>
          <TabPage $pad="8px 0 0 7px">
            <GroupRow>
              <Group $w={281} $h={349}>
                <GroupHead>Genel</GroupHead>
                <GroupBody>
                  <Field>
                    <FieldLabel $w={82}>Bloke</FieldLabel>
                    <Check />
                    <WebLabel>Web aktif</WebLabel>
                    <Input $w={89} $pr={6}>
                      <CheckGreen />&nbsp;Aktif
                      <EndMark><SmallDrop /></EndMark>
                    </Input>
                  </Field>
                  <Field>
                    <FieldLabel $w={82}>Stok tipi</FieldLabel>
                    <Input $w={182} $off>
                      SÜNGER<DotMark>···</DotMark>
                    </Input>
                  </Field>
                  <Field>
                    <FieldLabel $w={82}>Takip şekli</FieldLabel>
                    <Combo w={182}>Miktar Takibi</Combo>
                  </Field>
                  {["Dina", "Mar", "Ürü", "Kali", "Kali", "Sor", "Bilgi", "Hızlı"].map((l, i) => (
                    <Field key={i}>
                      <FieldLabel $w={82}>{l}</FieldLabel>
                    </Field>
                  ))}
                </GroupBody>
              </Group>
              <Group $w={262} $h={349} $m="0 2px 0 0">
                <GroupHead>Kontrol / Zorunluluk</GroupHead>
                <GroupBody>
                  <Field>
                    <FieldLabel $w={102}>Paket şekli</FieldLabel>
                    <Combo w={145}>Normal Stok</Combo>
                  </Field>
                  <Field>
                    <FieldLabel $w={102}>Fason çalışma</FieldLabel>
                    <Combo w={145} />
                  </Field>
                  <Field>
                    <FieldLabel $w={102}>Fason hizmet stoğu</FieldLabel>
                    <Input $w={145}>
                      <EndMark><BarcodeBtn /></EndMark>
                    </Input>
                  </Field>
                </GroupBody>
              </Group>
              <Group $w={280} $h={349}>
                <GroupHead>Fiyatlandırma / Maliyet</GroupHead>
                <GroupBody>
                  <Field>
                    <FieldLabel $w={118}>Fiyat uygulaması</FieldLabel>
                    <Combo w={144}>Stok Kendi Fiyatı</Combo>
                  </Field>
                  <Field>
                    <FieldLabel $w={118}>Gerçek maliyet takibi</FieldLabel>
                    <Check $ml={2} />
                  </Field>
                  <Field>
                    <FieldLabel $w={118}>Hizmet maliyet takibi</FieldLabel>
                    <Check $ml={2} />
                  </Field>
                </GroupBody>
              </Group>
            </GroupRow>
            <GroupRow>
              <Group $w={357} $h={153}>
                <GroupBody $pt={11}>
                  {["J/G", "Yab", "Etik", "Ref", "Öze"].map(l => (
                    <Field key={l}>
                      <FieldLabel $w={82}>{l}</FieldLabel>
                    </Field>
                  ))}
                </GroupBody>
              </Group>
              <Group $w={314} $h={153} />
            </GroupRow>
          </TabPage>
        </TabZone>
      </Body>
    </Client>

    <Modal>
      <ModalTitle>
        <Butterfly />
        <TitleText $active>Stok Kart Cari Bilgileri</TitleText>
        <WinButtons>
          <WinButton><GlyphMin /></WinButton>
          <WinButton><GlyphMax /></WinButton>
          <WinButton $wide $close><GlyphClose /></WinButton>
        </WinButtons>
      </ModalTitle>
      <ModalBody>
        <Toolbar $mr={11}>
          <ToolGroup>
            <ToolButton $off><IconFirst off /></ToolButton>
            <ToolButton $off><IconPrev off /></ToolButton>
            <ToolButton><IconNext /></ToolButton>
            <ToolButton><IconLast /></ToolButton>
            <ToolButton><IconRefresh /></ToolButton>
          </ToolGroup>
          <ToolGroup>
            <ToolButton $w={60} $split><IconPrinter /><DropMark /></ToolButton>
            <ToolButton $w={60} $split><IconPdf /><DropMark /></ToolButton>
            <ToolButton><IconWrench /></ToolButton>
          </ToolGroup>
          <ToolButton $w={80}><IconExit /></ToolButton>
          <HeadBlock>
            <HeadText>
              <HeadTitle $size={14.75} $flush>Stok Kart Cari Bilgileri</HeadTitle>
              <StatusRow>
                <StatusNo>64</StatusNo>
                <StatusOk>Onaylandı</StatusOk>
              </StatusRow>
            </HeadText>
            <ToolButton><IconHelp /></ToolButton>
          </HeadBlock>
        </Toolbar>

        <Group $w={539} $h={64} $m="7px 0 0 4px">
          <GroupHead>Stok Bilgileri</GroupHead>
          <InfoField>
            <FieldLabel $w={53}>Stok kodu</FieldLabel>
            <Input $w={120} $h={20}>50.SÜN.001</Input>
            <FieldLabel $w={49} $pl={5}>Stok adı</FieldLabel>
            <Input $w={300} $h={20}>SÜNGER 18 DNS EBATLI</Input>
          </InfoField>
        </Group>

        <ModalTabs>
          <TabBar $pl={3}>
            <Tab $w={127} $on>Cari Bilgileri</Tab>
          </TabBar>
          <TabPage $pad="8px 0 0 8px">
            <PageRow>
              <Panel>
                <PanelHead>İşlemler</PanelHead>
                <PanelList>
                  <PanelItem><SpinBlue />Bu Stok İçin Listeyi Güncelle (Birimsiz)</PanelItem>
                  <PanelItem><SpinBlue />Bütün Stoklar İçin Listeyi Güncelle (Biri...</PanelItem>
                  <PanelRule />
                  <PanelItem><SpinGreen />Bu Stok İçin Listeyi Güncelle (Birimli)</PanelItem>
                  <PanelItem><SpinGreen />Bütün Stoklar İçin Listeyi Güncelle (Biri...</PanelItem>
                </PanelList>
              </Panel>
              <Splitter $w={16}><Arrow /></Splitter>
              <Grid>
                <Marker />
                <Badge $x={-19} $y={-3} $d={23}>2</Badge>
                <GridRow $head>
                  <Cell $w={12} $head />
                  {COLS.map(([title, w]) => (
                    <Cell key={title} $w={w} $head>{title}</Cell>
                  ))}
                </GridRow>
                {ROWS.map(r => (
                  <GridRow key={r.no} $sel={r.sel} $bg={r.bg}>
                    <Cell $w={12} $ind>{r.sel && <Indicator />}</Cell>
                    <Cell $w={44} $right $key>{r.no}</Cell>
                    <Cell $w={72}><CheckRed />Aktif</Cell>
                    <Cell $w={150}>{r.name}</Cell>
                    <Cell $w={68} $right>02:00:00</Cell>
                    <Cell $w={57}>m3</Cell>
                    <Cell $w={97}>STANDART</Cell>
                    <Cell $w={145} />
                    <Cell $w={53} />
                  </GridRow>
                ))}
                <Note>
                  CSKNo önemlidir. En küçük numaradaki cari için MRP1 planlamada verilen<br />
                  sipariş kaydı oluşur.
                </Note>
                <Foot>
                  <NavBand>
                    <Nav><path d="M2 4h2v12H2zM11 4v12L4 10zM18 4v12l-7-6z" fill={NAV_OFF} /></Nav>
                    <Nav><path d="M13 4v12l-7-6z" fill={NAV_OFF} /></Nav>
                    <NavCount>1 / 3</NavCount>
                    <Nav><path d="M7 4v12l7-6z" fill={NAV_ON} /></Nav>
                    <Nav><path d="M2 4v12l7-6zM9 4v12l7-6zM16 4h2v12h-2z" fill={NAV_ON} /></Nav>
                    <Nav><path d="M8 2h3v6h6v3h-6v6H8v-6H2V8h6zM18 14v4h-4z" fill={NAV_ON} /></Nav>
                    <Nav><path d="M1 8h18v3H1z" fill={NAV_ON} /></Nav>
                    <Nav><path d="M10 5l7 7H3z" fill={NAV_ON} /></Nav>
                    <Nav><path d="M1 10l3-3 4 4 8-8 3 3-11 11z" fill={NAV_OFF} /></Nav>
                    <Nav><path d="M3 3l7 5 7-5 1 2-5 5 5 6-2 1-6-5-6 5-2-1 5-6-5-5z" fill={NAV_OFF} /></Nav>
                    <Nav><path d="M2 12c1-5 4-7 8-7 2 0 4 1 5 2l3-2v9h-9l3-2.500c-1-1-2-2-4-2-3 0-4 1-4 3z" fill={NAV_ON} /></Nav>
                  </NavBand>
                  <Scroll>
                    <ScrollHead $back />
                    <Thumb><Grip /></Thumb>
                    <ScrollHead />
                  </Scroll>
                </Foot>
              </Grid>
            </PageRow>
          </TabPage>
        </ModalTabs>
      </ModalBody>
    </Modal>
  </Screen>
);

export default App;
